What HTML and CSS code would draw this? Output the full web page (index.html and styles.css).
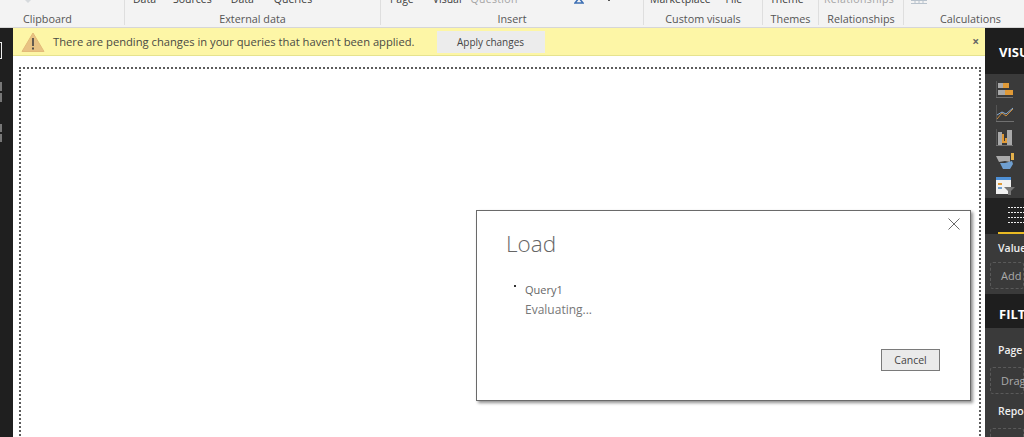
FILE: index.html
```html
<!DOCTYPE html>
<html lang="en">
<head>
<meta charset="utf-8">
<title>Load</title>
<link rel="stylesheet" href="styles.css">
</head>
<body>
<div class="app">
  <header class="ribbon">
    <section class="group g-clip">
      <div class="tops"><svg class="clip-ic" width="16" height="6" viewBox="0 0 16 6"><path d="M3 0h10L8 5z" fill="#d6dadd"/></svg></div>
      <div class="glabel">Clipboard</div>
    </section>
    <section class="group g-ext">
      <div class="tops"><span class="t1">Data</span><span class="t2">Sources</span><span class="t3">Data</span><span class="t4">Queries</span></div>
      <div class="glabel">External data</div>
    </section>
    <section class="group g-ins">
      <div class="tops"><span class="t5">Page</span><span class="t6">Visual</span><span class="t7 dim">Question</span>
        <svg class="t8" width="10" height="6" viewBox="0 0 10 6"><path d="M5 0 9 5H1z" fill="none" stroke="#3c6fb4" stroke-width="1.5"/></svg>
        <svg class="t9" width="4" height="4" viewBox="0 0 4 4"><rect x="1" width="2" height="2" fill="#555"/></svg></div>
      <div class="glabel">Insert</div>
    </section>
    <section class="group g-cus">
      <div class="tops"><span class="t10">Marketplace</span><span class="t11">File</span></div>
      <div class="glabel">Custom visuals</div>
    </section>
    <section class="group g-the">
      <div class="tops"><span class="t12">Theme</span></div>
      <div class="glabel">Themes</div>
    </section>
    <section class="group g-rel">
      <div class="tops"><span class="dim rel-top">Relationships</span></div>
      <div class="glabel">Relationships</div>
    </section>
    <section class="group g-cal">
      <div class="tops"><svg class="cal-ic" width="16" height="4" viewBox="0 0 16 4"><path d="M0 .5h16M0 3.500h16M4 0v4M8 0v4M12 0v4" stroke="#b8c2cc" fill="none"/></svg></div>
      <div class="glabel">Calculations</div>
    </section>
  </header>

  <div class="workspace">
    <nav class="rail">
      <div class="rail-ic active"></div>
      <div class="rail-ic grid"></div>
      <div class="rail-ic grid small"></div>
    </nav>

    <main class="centre">
      <div class="notice">
        <svg class="warn" width="24" height="20" viewBox="0 0 24 20"><path d="M12 1 23 19.500H1z" fill="#e8c283" stroke="#e3bb78" stroke-linejoin="round"/><path d="M12 6v8" stroke="#55504a" stroke-width="1.800"/><rect x="11" y="15.500" width="2" height="2" fill="#55504a"/></svg>
        <span class="notice-text">There are pending changes in your queries that haven't been applied.</span>
        <button class="apply">Apply changes</button>
        <span class="notice-close">×</span>
      </div>
      <div class="canvas"><div class="page"></div></div>
    </main>

    <aside class="panel">
      <div class="phead"><span>VISUALIZATIONS</span></div>
      <div class="gallery">
        <svg width="17" height="17" viewBox="0 0 17 17"><path d="M0 0v16.500h17" stroke="#707070" fill="none"/><rect x="2" y="2" width="6" height="5" fill="#a9a9a9"/><rect x="7" y="2" width="6" height="5" fill="#e09a37"/><rect x="2" y="9" width="8" height="5" fill="#a9a9a9"/><rect x="9" y="9" width="8" height="5" fill="#e09a37"/></svg>
        <svg width="18" height="17" viewBox="0 0 18 17"><path d="M0 0v16.500h18" stroke="#707070" fill="none"/><path d="M1 14l5-6 4 3 7-7" stroke="#c98a3c" fill="none"/><path d="M1 10l5-3 4 2 7-6" stroke="#8ab0d8" fill="none"/></svg>
        <svg width="17" height="17" viewBox="0 0 17 17"><path d="M0 0v16.500h17" stroke="#707070" fill="none"/><rect x="2" y="3" width="4" height="13" fill="#a9a9a9"/><rect x="11" y="1" width="5" height="15" fill="#a9a9a9"/><path d="M7 5v8h3V9" stroke="#e09a37" stroke-width="2" fill="none"/></svg>
        <svg width="19" height="17" viewBox="0 0 19 17"><path d="M0 3h14v6l-5-1-6 1z" fill="#a9a9a9"/><path d="M4 10h5l7-2 1 3-3 5H7z" fill="#6f9fd0"/><rect x="15" y="0" width="3" height="7" fill="#e3b04b"/></svg>
        <svg width="19" height="18" viewBox="0 0 19 18"><rect width="15" height="17" fill="#f1f1f1"/><rect width="15" height="3" fill="#4e90d6"/><rect x="2" y="6" width="4" height="2" fill="#e09a37"/><rect x="2" y="10" width="4" height="2" fill="#6f9fd0"/><path d="M8 10h11l-4 4v4h-3v-4z" fill="#777"/></svg>
      </div>
      <div class="tabs">
        <svg width="16" height="17" viewBox="0 0 16 17"><path d="M0 .5h16M0 5.500h16M0 10.500h16M0 15.500h16" stroke="#eee" stroke-dasharray="2 1" fill="none"/></svg>
      </div>
      <div class="tab-line"></div>
      <div class="well well-a">
        <div class="plabel">Values</div>
        <div class="drop">Add data fields here</div>
      </div>
      <div class="phead filt"><span>FILTERS</span></div>
      <div class="well well-b">
        <div class="plabel">Page level filters</div>
        <div class="drop">Drag data fields here</div>
        <div class="plabel">Report level filters</div>
        <div class="drop">Drag data fields here</div>
      </div>
    </aside>
  </div>

  <div class="dialog" role="dialog">
    <svg class="dlg-x" width="12" height="12" viewBox="0 0 12 12"><path d="M.500.500l11 11M11.500.500l-11 11" stroke="#6a6a6a" fill="none"/></svg>
    <h1 class="dlg-title">Load</h1>
    <div class="dlg-item">
      <span class="dot"></span>
      <div>
        <div class="qname">Query1</div>
        <div class="qstate">Evaluating...</div>
      </div>
    </div>
    <div class="dlg-foot"><button class="cancel">Cancel</button></div>
  </div>
</div>
</body>
</html>
```

FILE: styles.css
```css
* { box-sizing: border-box; }
html, body { margin: 0; height: 100%; overflow: hidden; }
body { font-family: "Open Sans", "Noto Sans", sans-serif; background: #fff; }
.app { width: 1024px; height: 437px; overflow: hidden; display: flex; flex-direction: column; position: relative; }

/* ribbon */
.ribbon { height: 28px; flex: none; display: flex; background: #f3f3f3; border-bottom: 1px solid #d6d6d6; overflow: hidden; color: #4a4a4a; }
.group { height: 25px; display: flex; flex-direction: column; justify-content: flex-end; border-right: 1px solid #dedede; flex: none; }
.g-clip { width: 125px; }
.g-ext { width: 256px; }
.g-ins { width: 263px; }
.g-cus { width: 119px; }
.g-the { width: 56px; }
.g-rel { width: 85px; }
.g-cal { flex: 1; border-right: 0; }
.tops { height: 12px; margin-top: -8px; flex: none; display: flex; align-items: flex-end; font-size: 10.500px; line-height: 14px; color: #3d3d3d; white-space: nowrap; position: relative; top: -3px; }
.dim { color: #a5a5a5; }
.rel-top { letter-spacing: .35px; }
.glabel { height: 14px; flex: none; margin-top: 2px; font-size: 10.800px; line-height: 14px; text-align: center; color: #555; position: relative; top: 1px; }
.g-clip .glabel { padding-right: 29px; }
.g-cal .glabel { padding-left: 13px; }
.clip-ic { margin: 0 0 2px 20px; }
.cal-ic { margin-bottom: 2px; }
.g-ext .tops { padding-left: 8px; }
.t2 { margin-left: 17px; } .t3 { margin-left: 19px; } .t4 { margin-left: 20px; }
.g-ins .tops { padding-left: 9px; }
.t6 { margin-left: 19px; } .t7 { margin-left: 9px; letter-spacing: .3px; }
.t8 { margin: 0 0 2px 56px; } .t9 { margin: 0 0 3px 23px; }
.g-cus .tops { padding-left: 6px; }
.t11 { margin-left: 15px; }
.g-the .tops { padding-left: 7px; }
.g-rel .tops { padding-left: 5px; }
.g-cal .tops { padding-left: 7px; }

/* workspace */
.workspace { flex: 1; min-height: 0; display: flex; }
.rail { width: 13px; flex: none; background: #1f1f1f; display: flex; flex-direction: column; padding-top: 14px; overflow: hidden; }
.rail-ic { width: 2px; flex: none; }
.rail-ic.active { height: 17px; border: 1px solid #eee; border-left: 0; }
.rail-ic.grid { height: 20px; margin-top: 23px; background: linear-gradient(#777 45%, #1f1f1f 45%, #1f1f1f 55%, #777 55%); }
.rail-ic.small { height: 18px; margin-top: 22px; }
.centre { flex: 1; min-width: 0; display: flex; flex-direction: column; }
.notice { height: 28px; flex: none; display: flex; align-items: center; background: #fdf6a6; border-bottom: 1px solid #e6e38f; padding: 0 6px 0 8px; color: #4a4a44; }
.warn { flex: none; }
.notice-text { font-size: 11.200px; margin-left: 8px; white-space: nowrap; }
.apply { margin-left: 22px; margin-top: 1px; width: 108px; height: 22px; border: 0; background: #ececec; font: 10px "Open Sans", sans-serif; color: #444; padding: 0; }
.notice-close { margin-left: auto; font-size: 12px; font-weight: 700; color: #666; }
.canvas { flex: 1; min-height: 0; padding: 11px 4px 0 6px; background: #fff; overflow: hidden; }
.page { height: 400px; border: 2px dotted #5c5c5c; border-bottom: 0; }

/* right panel */
.panel { width: 39px; flex: none; background: #222; color: #eee; overflow: hidden; white-space: nowrap; font-size: 11px; }
.phead { height: 46px; padding: 15px 0 0 14px; font-size: 13px; line-height: 18px; font-weight: 700; color: #fff; background: #1e1e1e; }
.filt { height: 34px; padding-top: 11px; }
.gallery { height: 124px; background: #3a3a3a; padding: 7px 0 0 11px; display: flex; flex-direction: column; gap: 7px; }
.gallery svg { display: block; flex: none; }
.tabs { height: 34px; background: #222; padding: 9px 0 0 23px; }
.tabs svg { display: block; }
.tab-line { height: 2px; background: #e8b923; margin-left: 13px; }
.well { background: #3a3a3a; padding-left: 13px; font-weight: 600; }
.well-a { height: 60px; padding-top: 7px; }
.well-b { height: 109px; padding-top: 15px; }
.plabel { font-size: 10.500px; height: 15px; line-height: 15px; }
.drop { height: 27px; margin: 6px 0 0 -8px; padding-left: 10px; border: 1px dashed #5a5a5a; border-radius: 3px; line-height: 25px; font-weight: 400; color: #aaa; font-size: 11px; }
.well-b .drop { margin-top: 9px; margin-bottom: 10px; }

/* dialog */
.dialog { position: absolute; left: 476px; top: 210px; width: 495px; height: 191px; background: #fff; border: 1px solid #6a6a6a; box-shadow: 2px 2px 3px #8f8f8f; padding: 17px 29px 0; color: #666; display: flex; flex-direction: column; }
.dlg-x { position: absolute; right: 10px; top: 7px; }
.dlg-title { margin: 0; font-size: 22.500px; line-height: 32px; font-weight: 300; color: #666; }
.dlg-item { display: flex; margin: 20px 0 0 8px; line-height: 20px; }
.dot { width: 2px; height: 2px; background: #333; margin: 5px 9px 0 0; }
.qname { color: #666; font-size: 11px; }
.qstate { color: #777; font-size: 12px; }
.dlg-foot { margin-top: auto; display: flex; justify-content: flex-end; padding-bottom: 29px; }
.cancel { width: 59px; height: 22px; margin-right: 1px; background: #eaeaea; border: 1px solid #7a7a7a; font: 10.500px "Open Sans", sans-serif; color: #444; padding: 0; }
```
